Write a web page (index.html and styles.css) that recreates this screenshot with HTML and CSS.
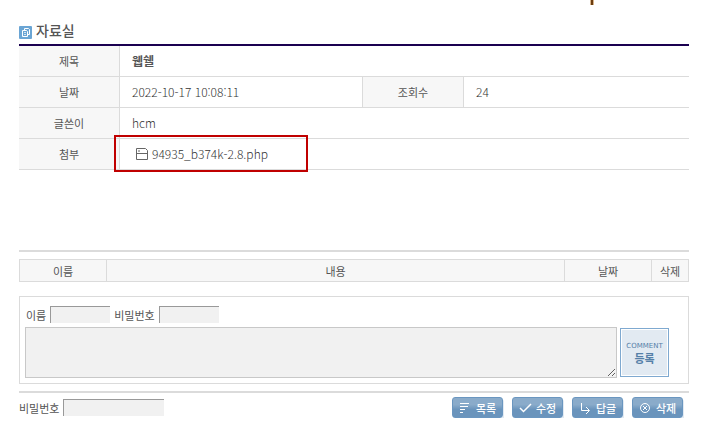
FILE: index.html
```html
<!DOCTYPE html>
<html lang="ko">
<head>
    <meta charset="UTF-8">
    <meta name="viewport" content="width=device-width, initial-scale=1.0">
    <title>자료실</title>
    <link rel="stylesheet" href="styles.css">
</head>
<body>
    <div class="banner-tail"></div>
    <main class="board">
        <h1 class="title">
            <svg width="13" height="13" viewBox="0 0 13 13">
                <rect width="13" height="13" rx="1" fill="#6aa5d4"/>
                <path d="M5.5 4V2.5H9.5L10.5 3.5V8.5H8.500M3.5 4.5H7.5L8.5 5.500V10.5H3.5Z" fill="none" stroke="#fff"/>
                <path d="M5 6.5H7M5 8.5H7" stroke="#fff" stroke-opacity=".7"/>
            </svg>
            자료실
        </h1>

        <table class="view">
            <colgroup>
                <col class="label-col"><col><col class="inner-col"><col class="count-col">
            </colgroup>
            <tr>
                <th scope="row">제목</th>
                <td colspan="3" class="subject">웹쉘</td>
            </tr>
            <tr>
                <th scope="row">날짜</th>
                <td>2022-10-17 10:08:11</td>
                <th scope="row" class="inner">조회수</th>
                <td>24</td>
            </tr>
            <tr>
                <th scope="row">글쓴이</th>
                <td colspan="3">hcm</td>
            </tr>
            <tr>
                <th scope="row">첨부</th>
                <td colspan="3" class="attach">
                    <a href="#">
                        <svg width="12" height="12" viewBox="0 0 12 12" fill="none" stroke="#666">
                            <path d="M.5 .5H9.5L11.5 2.5V11.5H.5ZM.5 5.5H11.5M2 3H4"/>
                        </svg>
                        94935_b374k-2.8.php
                    </a>
                    <span class="highlight"></span>
                </td>
            </tr>
        </table>

        <div class="content"></div>

        <table class="comments">
            <tr>
                <th scope="col" class="name">이름</th>
                <th scope="col">내용</th>
                <th scope="col" class="date">날짜</th>
                <th scope="col" class="remove">삭제</th>
            </tr>
        </table>

        <form class="comment-form">
            <div class="fields">
                <label for="name">이름</label>
                <input type="text" id="name">
                <label for="pass">비밀번호</label>
                <input type="password" id="pass">
            </div>
            <div class="write">
                <textarea aria-label="내용"></textarea>
                <button type="button" class="submit"><small>COMMENT</small>등록</button>
            </div>
        </form>

        <div class="footer">
            <div class="password">
                <label for="board-pass">비밀번호</label>
                <input type="password" id="board-pass">
            </div>
            <div class="buttons">
                <button type="button">
                    <svg width="13" height="12" viewBox="0 0 13 12"><path d="M1 1.5H10M1 4.5H9M1 7.5H6M1 10.5H4"/></svg>
                    목록
                </button>
                <button type="button">
                    <svg width="13" height="12" viewBox="0 0 13 12"><path d="M1 6L4.5 9.5L12 2" stroke-width="1.5"/></svg>
                    수정
                </button>
                <button type="button">
                    <svg width="13" height="12" viewBox="0 0 13 12"><path d="M2.5 1V8.5H10M7 5L10.5 8.5L7 12"/></svg>
                    답글
                </button>
                <button type="button">
                    <svg width="13" height="12" viewBox="0 0 13 12"><circle cx="6" cy="6" r="4.5"/><path d="M4 4L8 8M8 4L4 8"/></svg>
                    삭제
                </button>
            </div>
        </div>
    </main>
</body>
</html>
```

FILE: styles.css
```css
* {
    box-sizing: border-box;
}

body {
    margin: 0;
    background: #fff;
    color: #555;
    font: 12px/16px "Noto Sans CJK KR", sans-serif;
}

svg {
    flex: none;
}

.banner-tail {
    position: absolute;
    top: 0;
    left: 590px;
    width: 4px;
    height: 5px;
    background: #6b3d10;
    border: solid #d8b48a;
    border-width: 0 1px;
}

.board {
    padding: 18px 14px 0 19px;
}

.title {
    display: flex;
    align-items: center;
    gap: 4px;
    height: 26px;
    margin: 0;
    padding-bottom: 2px;
    font-size: 14px;
    font-weight: 500;
    line-height: 20px;
}

.title svg {
    margin-top: 4px;
}

table {
    width: 100%;
    border-collapse: separate;
    border-spacing: 0;
    table-layout: fixed;
}

th {
    background: #f7f7f7;
    font-size: 11px;
    font-weight: 400;
    padding: 0;
}

/* post details */
.view {
    border-top: 2px solid #1a0050;
}

.label-col {
    width: 101px;
}

.inner-col {
    width: 102px;
}

.count-col {
    width: 225px;
}

.view th,
.view td {
    height: 31px;
    border-bottom: 1px solid #dbdbdb;
}

.view th {
    border-right: 1px solid #dbdbdb;
}

.view .inner {
    border-left: 1px solid #dbdbdb;
}

.view td {
    padding: 0 12px;
    color: #333;
    font-weight: 300;
}

.view .subject {
    color: #555;
    font-weight: 700;
}

.view .attach {
    position: relative;
    padding-left: 16px;
}

.attach a {
    display: flex;
    align-items: center;
    gap: 4px;
    color: inherit;
    text-decoration: none;
}

.highlight {
    position: absolute;
    top: -4px;
    left: -6px;
    width: 194px;
    height: 37px;
    border: 2px solid #c00000;
}

.content {
    height: 82px;
    border-bottom: 2px solid #dbdbdb;
}

/* comments */
.comments {
    margin-top: 7px;
    border: 1px solid #dbdbdb;
}

.comments th {
    height: 21px;
}

.comments th + th {
    border-left: 1px solid #dbdbdb;
}

.comments .name {
    width: 86px;
}

.comments .date {
    width: 87px;
}

.comments .remove {
    width: 37px;
}

.comment-form {
    margin-top: 14px;
    padding: 9px 19px 5px 5px;
    border: 1px solid #dbdbdb;
}

.fields {
    display: flex;
    align-items: center;
    padding-left: 1px;
}

label {
    margin-right: 4px;
    font-size: 11px;
}

input {
    width: 60px;
    height: 17px;
    padding: 0 2px;
    background: #f1f1f1;
    border: solid #999;
    border-width: 1px 0 0 1px;
    font: inherit;
}

.fields input {
    margin-right: 4px;
}

.write {
    display: flex;
    align-items: center;
    gap: 3px;
    margin-top: 4px;
}

textarea {
    flex: 1;
    height: 51px;
    background: #f1f1f1;
    border: 1px solid #c8c8c8;
    font: inherit;
}

.submit {
    width: 49px;
    height: 49px;
    padding: 0;
    background: #e2eaf2;
    border: 1px solid #7fa9d0;
    box-shadow: inset 0 0 0 1px #fff;
    color: #5580a8;
    font: 700 11px/14px "Noto Sans CJK KR", sans-serif;
}

.submit small {
    display: block;
    font: 7px/10px "DejaVu Sans", sans-serif;
}

.footer {
    display: flex;
    justify-content: space-between;
    margin-top: 7px;
    padding-top: 4px;
    border-top: 2px solid #dbdbdb;
}

.password {
    display: flex;
    align-items: center;
}

.password input {
    width: 101px;
}

.buttons {
    display: flex;
    gap: 9px;
    padding-right: 6px;
}

.buttons button {
    display: flex;
    align-items: center;
    justify-content: center;
    gap: 4px;
    width: 51px;
    height: 21px;
    padding: 0;
    background: linear-gradient(#8aabca 35%, #6a94bc 60%);
    border: 1px solid #6a96c0;
    border-radius: 3px;
    box-shadow: 1px 2px 0 #e2eaf2;
    color: #fff;
    font: 500 11px/16px "Noto Sans CJK KR", sans-serif;
}

.buttons svg {
    fill: none;
    stroke: #fff;
}
```
